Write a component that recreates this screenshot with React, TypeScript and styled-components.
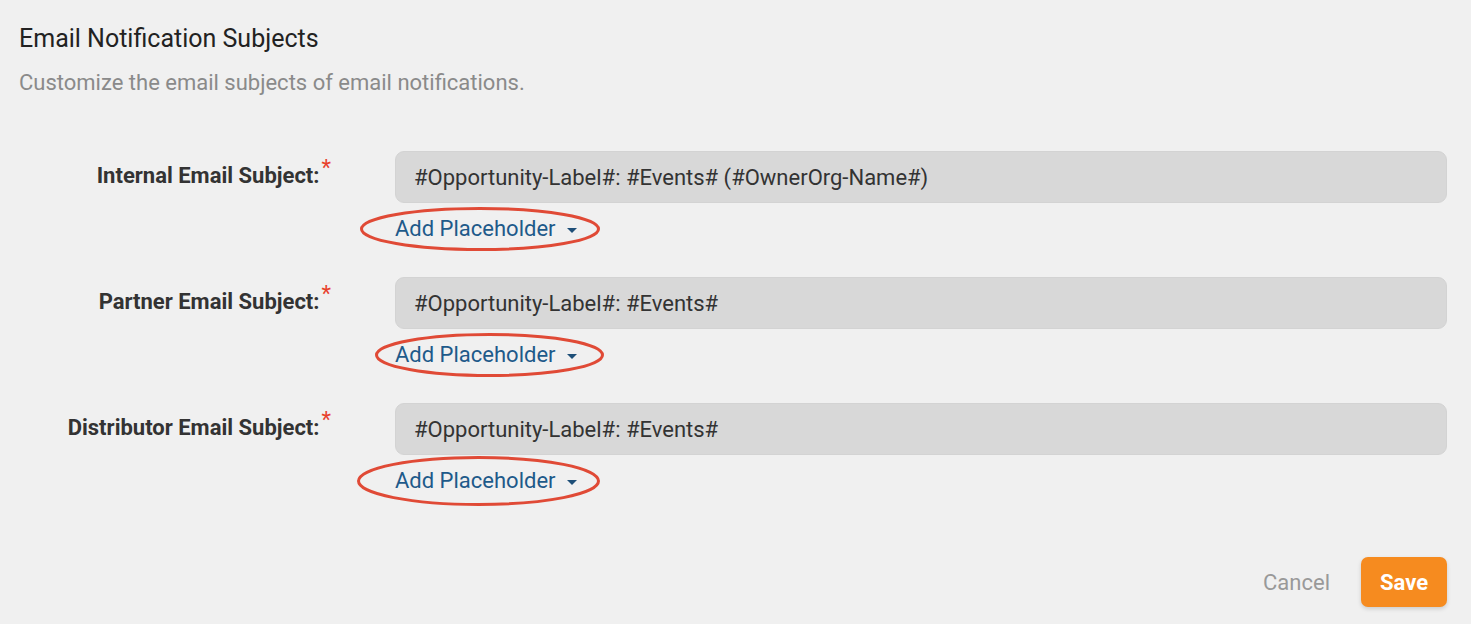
import React from 'react';
import styled, { createGlobalStyle } from 'styled-components';

const GlobalStyle = createGlobalStyle`
  html, body {
    margin: 0;
    padding: 0;
    background: #f0f0f0;
    font-family: Roboto, "Liberation Sans", Arial, sans-serif;
  }
`;

const Page = styled.div`
  padding: 24px 24px 0 19px;
  min-height: 624px;
  box-sizing: border-box;
`;

const Title = styled.h2`
  margin: 0;
  font-size: 25px;
  font-weight: 400;
  color: #222;
  line-height: 30px;
`;

const Subtitle = styled.p`
  margin: 16px 0 0 0;
  font-size: 22px;
  color: #8a8a8a;
  line-height: 26px;
`;

const Form = styled.div`
  margin-top: 55px;
  display: flex;
  flex-direction: column;
  gap: 34px;
`;

const Row = styled.div`
  display: grid;
  grid-template-columns: 312px 1fr;
  column-gap: 64px;
`;

const Label = styled.label`
  justify-self: end;
  font-size: 22px;
  font-weight: 700;
  color: #333;
  padding-top: 12px;
  line-height: 26px;
  white-space: nowrap;
`;

const Required = styled.span`
  color: #e8412c;
  font-weight: 400;
  font-size: 22px;
  vertical-align: top;
  position: relative;
  top: -8px;
  margin-left: 2px;
`;

const Field = styled.div`
  display: flex;
  flex-direction: column;
  align-items: flex-start;
`;

const Input = styled.div`
  width: 100%;
  height: 52px;
  box-sizing: border-box;
  background: #d8d8d8;
  border: 1px solid #d3d3d3;
  border-radius: 9px;
  padding: 0 18px;
  display: flex;
  align-items: center;
  font-size: 22px;
  color: #333;
`;

const PlaceholderLink = styled.a`
  position: relative;
  margin-top: 12px;
  display: inline-flex;
  align-items: center;
  gap: 11px;
  font-size: 22px;
  line-height: 28px;
  color: #1e5a8a;
  cursor: pointer;
`;

const Caret = styled.span`
  width: 0;
  height: 0;
  border-left: 5px solid transparent;
  border-right: 5px solid transparent;
  border-top: 5px solid #1e4f78;
  margin-top: 2px;
`;

const Annotation = styled.svg`
  position: absolute;
  pointer-events: none;
  overflow: visible;
`;

const Footer = styled.div`
  margin-top: 62px;
  display: flex;
  justify-content: flex-end;
  align-items: center;
  gap: 31px;
`;

const CancelButton = styled.button`
  background: none;
  border: none;
  padding: 0;
  font-family: inherit;
  font-size: 22px;
  color: #999;
  cursor: pointer;
`;

const SaveButton = styled.button`
  width: 86px;
  height: 50px;
  border: none;
  border-radius: 7px;
  background: #f68b1f;
  color: #fff;
  font-family: inherit;
  font-size: 22px;
  font-weight: 700;
  box-shadow: 0 2px 4px rgba(0, 0, 0, 0.15);
  cursor: pointer;
`;

type Ring = { left: number; top: number; w: number; h: number };

const rows: { label: string; value: string; ring: Ring }[] = [
  {
    label: 'Internal Email Subject:',
    value: '#Opportunity-Label#: #Events# (#OwnerOrg-Name#)',
    ring: { left: -35, top: -8, w: 240, h: 44 },
  },
  {
    label: 'Partner Email Subject:',
    value: '#Opportunity-Label#: #Events#',
    ring: { left: -20, top: -8, w: 229, h: 44 },
  },
  {
    label: 'Distributor Email Subject:',
    value: '#Opportunity-Label#: #Events#',
    ring: { left: -38, top: -11, w: 243, h: 50 },
  },
];

const RedRing: React.FC<{ ring: Ring }> = ({ ring }) => (
  <Annotation
    width={ring.w}
    height={ring.h}
    style={{ left: ring.left, top: ring.top }}
    viewBox={`0 0 ${ring.w} ${ring.h}`}
  >
    <ellipse
      cx={ring.w / 2}
      cy={ring.h / 2}
      rx={ring.w / 2 - 1.5}
      ry={ring.h / 2 - 1.5}
      fill="none"
      stroke="#e04a36"
      strokeWidth="3"
    />
  </Annotation>
);

export default function App() {
  return (
    <>
      <GlobalStyle />
      <Page>
        <Title>Email Notification Subjects</Title>
        <Subtitle>Customize the email subjects of email notifications.</Subtitle>
        <Form>
          {rows.map((r) => (
            <Row key={r.label}>
              <Label>
                {r.label}
                <Required>*</Required>
              </Label>
              <Field>
                <Input>{r.value}</Input>
                <PlaceholderLink>
                  Add Placeholder
                  <Caret />
                  <RedRing ring={r.ring} />
                </PlaceholderLink>
              </Field>
            </Row>
          ))}
        </Form>
        <Footer>
          <CancelButton>Cancel</CancelButton>
          <SaveButton>Save</SaveButton>
        </Footer>
      </Page>
    </>
  );
}
